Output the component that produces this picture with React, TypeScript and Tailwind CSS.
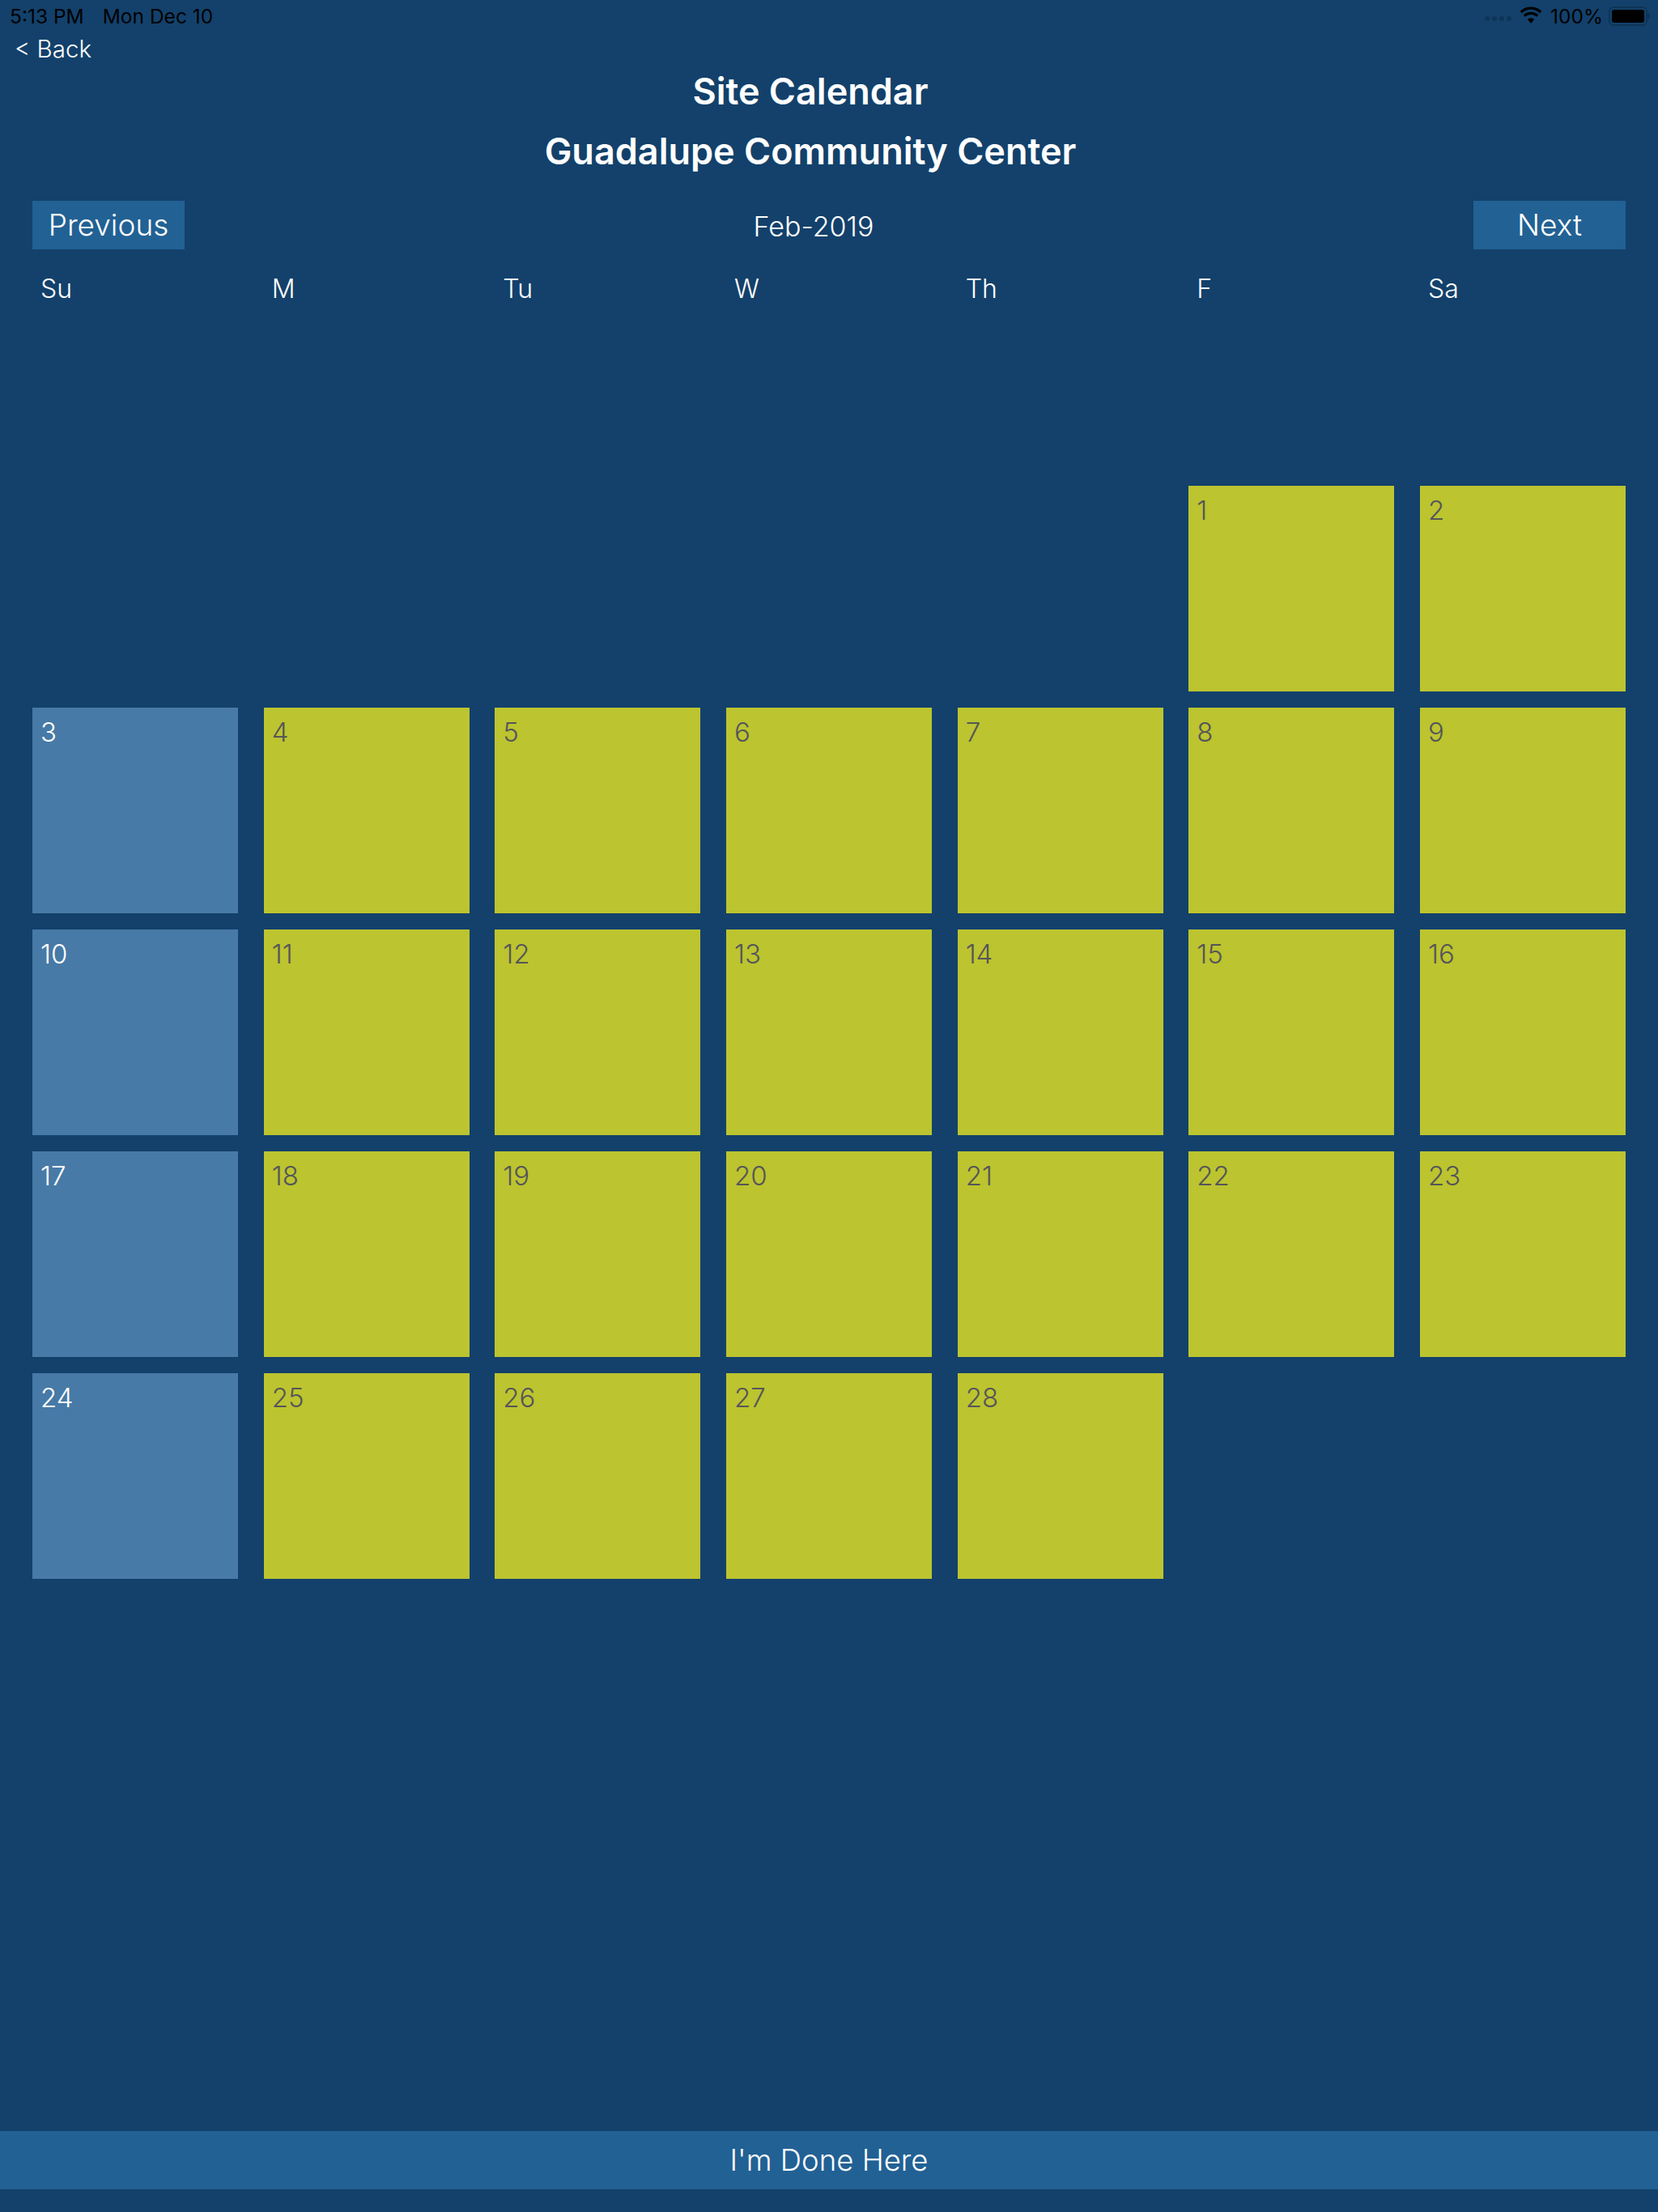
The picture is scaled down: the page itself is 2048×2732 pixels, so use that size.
const days = ["Su", "M", "Tu", "W", "Th", "F", "Sa"];
const cells: (number | null)[] = [
  ...Array(5).fill(null),
  ...Array.from({ length: 28 }, (_, i) => i + 1),
];

function Cell({ n, col }: { n: number | null; col: number }) {
  if (n === null) return <div className="h-[254px]" />;
  const sunday = col === 0;
  return (
    <div
      className={`h-[254px] pl-[10px] pt-[11px] text-[33px] font-light leading-[38px] ${
        sunday ? "bg-[#477aa6] text-white" : "bg-[#bcc42f] text-[#55555a]"
      }`}
    >
      {n}
    </div>
  );
}

export default function App() {
  return (
    <div
      className="w-[2048px] h-[2732px] bg-[#13416b] text-white flex flex-col overflow-hidden"
      style={{ fontFamily: "Inter, 'Liberation Sans', sans-serif" }}
    >
      <div className="h-10 pl-[12px] pr-[10px] flex items-center justify-between text-black text-[24.5px] leading-[40px]">
        <div className="flex gap-[23px]">
          <span>5:13 PM</span>
          <span>Mon Dec 10</span>
        </div>
        <div className="flex items-center">
          <div className="flex gap-[3px] mr-[10px] mt-[6px]">
            <span className="w-[6px] h-[6px] rounded-full bg-[#0e3557]" />
            <span className="w-[6px] h-[6px] rounded-full bg-[#0e3557]" />
            <span className="w-[6px] h-[6px] rounded-full bg-[#0e3557]" />
            <span className="w-[6px] h-[6px] rounded-full bg-[#0e3557]" />
          </div>
          <svg width="28" height="21" viewBox="0 0 28 21" className="mr-[10px] -mt-[4px]">
            <path d="M14 21 L9.8 15.8 A7 7 0 0 1 18.2 15.8 Z" fill="#000" />
            <path d="M5.8 11.6 A12 12 0 0 1 22.2 11.6" fill="none" stroke="#000" strokeWidth="3.2" />
            <path d="M1.8 7 A17.5 17.5 0 0 1 26.2 7" fill="none" stroke="#000" strokeWidth="3.2" />
          </svg>
          <span>100%</span>
          <div className="ml-[7px] flex items-center">
            <div className="w-[48px] h-[24px] rounded-[6px] border-2 border-[#0e3557] p-[2px]">
              <div className="w-full h-full rounded-[3px] bg-black" />
            </div>
            <div className="w-[3px] h-[8px] rounded-r-[2px] bg-[#0e3557]" />
          </div>
        </div>
      </div>

      <div className="pl-[18px] h-[40px] text-[29.5px] leading-[40px] font-light">&lt; Back</div>

      <div className="-mt-[4px] pr-[46px] text-center text-[45px] font-semibold leading-[74px]">
        <div>Site Calendar</div>
        <div>Guadalupe Community Center</div>
      </div>

      <div className="mt-[24px] mx-10 h-[60px] grid grid-cols-[188px_1fr_188px] items-center">
        <div className="h-[60px] bg-[#226194] flex items-center justify-center text-[37px] font-light">Previous</div>
        <div className="text-center text-[34px] font-light pr-[38px] pt-[3px]">Feb-2019</div>
        <div className="h-[60px] bg-[#226194] flex items-center justify-center text-[37px] font-light">Next</div>
      </div>

      <div className="mt-[24px] mx-10 grid grid-cols-[repeat(7,254px)] gap-x-[31.67px]">
        {days.map((d) => (
          <div key={d} className="pl-[10px] text-[32px] font-light leading-[50px]">
            {d}
          </div>
        ))}
      </div>

      <div className="mt-[218px] mx-10 grid grid-cols-[repeat(7,254px)] gap-x-[31.67px] gap-y-[20px]">
        {cells.map((n, i) => (
          <Cell key={i} n={n} col={i % 7} />
        ))}
      </div>

      <div className="mt-auto mb-[28px] h-[72px] bg-[#226194] flex items-center justify-center text-[36.5px] font-light">
        I'm Done Here
      </div>
    </div>
  );
}
